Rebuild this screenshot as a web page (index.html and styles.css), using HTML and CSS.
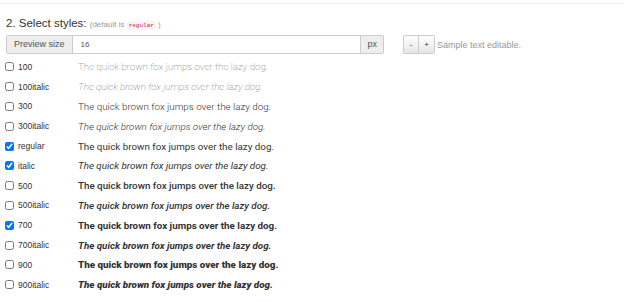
FILE: index.html
```html
<!DOCTYPE html>
<html lang="en">
<head>
    <meta charset="UTF-8">
    <title>Select styles</title>
    <link rel="stylesheet" href="styles.css">
</head>
<body>
    <div class="section">
        <h3 class="section-title">2. Select styles: <small>(default is <code>regular</code> )</small></h3>

        <div class="toolbar">
            <div class="input-group">
                <span class="addon">Preview size</span>
                <input type="text" class="size-input" value="16">
                <span class="addon addon-right">px</span>
            </div>
            <div class="btn-group">
                <button class="btn">-</button>
                <button class="btn">+</button>
            </div>
            <span class="hint">Sample text editable.</span>
        </div>

        <ul class="styles">
            <li><label><input type="checkbox"> 100</label><span class="sample w100">The quick brown fox jumps over the lazy dog.</span></li>
            <li><label><input type="checkbox"> 100italic</label><span class="sample w100 it">The quick brown fox jumps over the lazy dog.</span></li>
            <li><label><input type="checkbox"> 300</label><span class="sample w300">The quick brown fox jumps over the lazy dog.</span></li>
            <li><label><input type="checkbox"> 300italic</label><span class="sample w300 it">The quick brown fox jumps over the lazy dog.</span></li>
            <li><label><input type="checkbox" checked> regular</label><span class="sample w400">The quick brown fox jumps over the lazy dog.</span></li>
            <li><label><input type="checkbox" checked> italic</label><span class="sample w400 it">The quick brown fox jumps over the lazy dog.</span></li>
            <li><label><input type="checkbox"> 500</label><span class="sample w500">The quick brown fox jumps over the lazy dog.</span></li>
            <li><label><input type="checkbox"> 500italic</label><span class="sample w500 it">The quick brown fox jumps over the lazy dog.</span></li>
            <li><label><input type="checkbox" checked> 700</label><span class="sample w700">The quick brown fox jumps over the lazy dog.</span></li>
            <li><label><input type="checkbox"> 700italic</label><span class="sample w700 it">The quick brown fox jumps over the lazy dog.</span></li>
            <li><label><input type="checkbox"> 900</label><span class="sample w900">The quick brown fox jumps over the lazy dog.</span></li>
            <li><label><input type="checkbox"> 900italic</label><span class="sample w900 it">The quick brown fox jumps over the lazy dog.</span></li>
        </ul>
    </div>
</body>
</html>
```

FILE: styles.css
```css
body {
    margin: 0;
    font-family: "Liberation Sans", Arial, sans-serif;
    color: #333;
    background: #fff;
}

.section {
    border-top: 1px solid #eee;
    margin-top: 3px;
    padding: 0 6px;
}

.section-title {
    font-size: 11.5px;
    font-weight: normal;
    margin: 11px 0 1px;
    line-height: 16px;
}

.section-title small {
    font-size: 8px;
    color: #999;
}

.section-title code {
    font-family: "Liberation Mono", monospace;
    font-size: 6px;
    color: #c7254e;
    background: #f9f2f4;
    padding: 1px 2px;
    border-radius: 2px;
}

.toolbar {
    display: flex;
    align-items: center;
}

.input-group {
    display: flex;
    width: 378px;
    height: 19px;
}

.addon {
    background: #eee;
    border: 1px solid #ccc;
    border-radius: 2px 0 0 2px;
    color: #555;
    font-size: 9px;
    line-height: 17px;
    padding: 0 7px;
}

.addon-right {
    border-radius: 0 2px 2px 0;
    padding: 0 6px;
}

.size-input {
    flex: 1;
    border: 1px solid #ccc;
    border-left: none;
    border-right: none;
    font-family: inherit;
    font-size: 8px;
    color: #555;
    padding: 0 8px;
    outline: none;
}

.btn-group {
    display: flex;
    margin-left: 19px;
}

.btn {
    width: 16px;
    height: 19px;
    padding: 0;
    border: 1px solid #ccc;
    background: linear-gradient(#fff, #e6e6e6);
    color: #333;
    font-size: 8px;
    font-family: inherit;
}

.btn:first-child {
    border-radius: 2px 0 0 2px;
}

.btn:last-child {
    border-left: none;
    border-radius: 0 2px 2px 0;
}

.hint {
    font-size: 9px;
    color: #999;
    margin-left: 2px;
}

.styles {
    list-style: none;
    margin: 3px 0 0;
    padding: 0;
}

.styles li {
    display: flex;
    align-items: center;
    height: 19.8px;
}

.styles label {
    display: flex;
    align-items: center;
    width: 72px;
    font-size: 8.5px;
    color: #333;
}

.styles input[type="checkbox"] {
    width: 9px;
    height: 9px;
    margin: 0 4px 0 -1px;
}

.sample {
    font-family: Roboto, sans-serif;
    font-size: 9.8px;
    color: #333;
}

.w100 { font-weight: 100; color: #555; }
.w300 { font-weight: 300; }
.w400 { font-weight: 400; }
.w500 { font-weight: 500; }
.w700 { font-weight: 700; }
.w900 { font-weight: 900; }
.it { font-style: italic; }
```
